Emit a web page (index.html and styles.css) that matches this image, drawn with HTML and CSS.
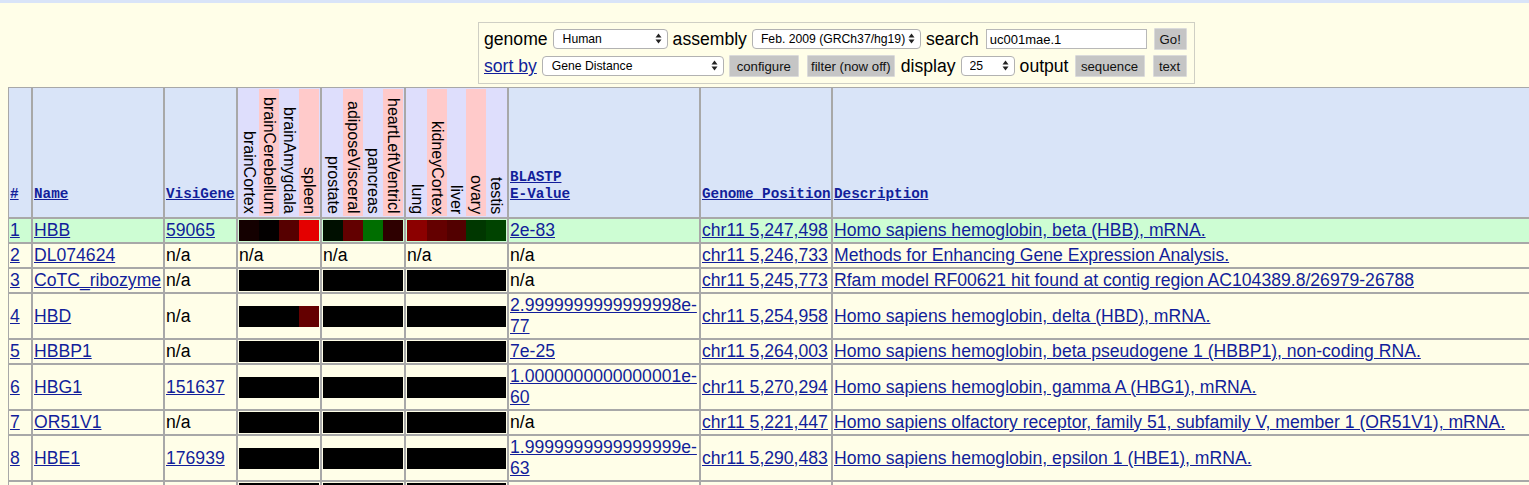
FILE: index.html
```html
<!DOCTYPE html>
<html lang="en">
<head>
<meta charset="utf-8">
<title>Gene Sorter</title>
<link rel="stylesheet" href="styles.css">
</head>
<body>
<div class="topbar"></div>
<main class="page">
  <form class="controls">
    <div class="ctl-row">
      <span class="lbl">genome</span>
      <span class="sel w-genome"><select><option>Human</option></select><svg class="arrows" viewBox="0 0 7 11" width="7" height="11"><path d="M0.5 4.5 L3.5 0.5 L6.5 4.5 Z M0.5 6.5 L3.5 10.5 L6.5 6.5 Z"/></svg></span>
      <span class="lbl">assembly</span>
      <span class="sel w-asm"><select><option>Feb. 2009 (GRCh37/hg19)</option></select><svg class="arrows" viewBox="0 0 7 11" width="7" height="11"><path d="M0.5 4.5 L3.5 0.5 L6.5 4.5 Z M0.5 6.5 L3.5 10.5 L6.5 6.5 Z"/></svg></span>
      <span class="lbl">search</span>
      <input class="search" type="text" value="uc001mae.1">
      <button type="button" class="btn w-go">Go!</button>
    </div>
    <div class="ctl-row">
      <a class="lbl link" href="#">sort by</a>
      <span class="sel w-sort"><select><option>Gene Distance</option></select><svg class="arrows" viewBox="0 0 7 11" width="7" height="11"><path d="M0.5 4.5 L3.5 0.5 L6.5 4.5 Z M0.5 6.5 L3.5 10.5 L6.5 6.5 Z"/></svg></span>
      <button type="button" class="btn w-conf">configure</button>
      <button type="button" class="btn w-filter">filter (now off)</button>
      <span class="lbl">display</span>
      <span class="sel w-disp"><select><option>25</option></select><svg class="arrows" viewBox="0 0 7 11" width="7" height="11"><path d="M0.5 4.5 L3.5 0.5 L6.5 4.5 Z M0.5 6.5 L3.5 10.5 L6.5 6.5 Z"/></svg></span>
      <span class="lbl">output</span>
      <button type="button" class="btn w-seq">sequence</button>
      <button type="button" class="btn w-text">text</button>
    </div>
  </form>

  <table class="sorter">
    <thead>
      <tr>
        <th class="c-num hd"><a href="#">#</a></th>
        <th class="c-name hd"><a href="#">Name</a></th>
        <th class="c-visi hd"><a href="#">VisiGene</a></th>
        <th class="c-g1 tis"><div class="labels"><span>brainCortex</span><span class="pk">brainCerebellum</span><span>brainAmygdala</span><span class="pk">spleen</span></div></th>
        <th class="c-g2 tis"><div class="labels"><span>prostate</span><span class="pk">adiposeVisceral</span><span>pancreas</span><span class="pk">heartLeftVentricl</span></div></th>
        <th class="c-g3 tis"><div class="labels"><span>lung</span><span class="pk">kidneyCortex</span><span>liver</span><span class="pk">ovary</span><span>testis</span></div></th>
        <th class="c-blast hd"><a href="#">BLASTP<br>E-Value</a></th>
        <th class="c-pos hd"><a href="#">Genome&nbsp;Position</a></th>
        <th class="c-desc hd"><a href="#">Description</a></th>
      </tr>
    </thead>
    <tbody>
      <tr class="hl">
        <td><a href="#">1</a></td>
        <td><a href="#">HBB</a></td>
        <td><a href="#">59065</a></td>
        <td><div class="heat"><span style="background:#140000"></span><span style="background:#030000"></span><span style="background:#560000"></span><span style="background:#e40000"></span></div></td>
        <td><div class="heat"><span style="background:#000f00"></span><span style="background:#620000"></span><span style="background:#006e00"></span><span style="background:#2e0000"></span></div></td>
        <td><div class="heat"><span style="background:#8c0000"></span><span style="background:#640000"></span><span style="background:#520000"></span><span style="background:#003700"></span><span style="background:#004300"></span></div></td>
        <td><a href="#">2e-83</a></td>
        <td><a href="#">chr11 5,247,498</a></td>
        <td><a href="#">Homo sapiens hemoglobin, beta (HBB), mRNA.</a></td>
      </tr>
      <tr>
        <td><a href="#">2</a></td>
        <td><a href="#">DL074624</a></td>
        <td>n/a</td>
        <td>n/a</td>
        <td>n/a</td>
        <td>n/a</td>
        <td>n/a</td>
        <td><a href="#">chr11 5,246,733</a></td>
        <td><a href="#">Methods for Enhancing Gene Expression Analysis.</a></td>
      </tr>
      <tr>
        <td><a href="#">3</a></td>
        <td><a href="#">CoTC_ribozyme</a></td>
        <td>n/a</td>
        <td><div class="heat"><span></span><span></span><span></span><span></span></div></td>
        <td><div class="heat"><span></span><span></span><span></span><span></span></div></td>
        <td><div class="heat"><span></span><span></span><span></span><span></span><span></span></div></td>
        <td>n/a</td>
        <td><a href="#">chr11 5,245,773</a></td>
        <td><a href="#">Rfam model RF00621 hit found at contig region AC104389.8/26979-26788</a></td>
      </tr>
      <tr>
        <td><a href="#">4</a></td>
        <td><a href="#">HBD</a></td>
        <td>n/a</td>
        <td><div class="heat"><span></span><span></span><span></span><span style="background:#640000"></span></div></td>
        <td><div class="heat"><span></span><span></span><span></span><span></span></div></td>
        <td><div class="heat"><span></span><span></span><span></span><span></span><span></span></div></td>
        <td><a href="#">2.9999999999999998e-<wbr>77</a></td>
        <td><a href="#">chr11 5,254,958</a></td>
        <td><a href="#">Homo sapiens hemoglobin, delta (HBD), mRNA.</a></td>
      </tr>
      <tr>
        <td><a href="#">5</a></td>
        <td><a href="#">HBBP1</a></td>
        <td>n/a</td>
        <td><div class="heat"><span></span><span></span><span></span><span></span></div></td>
        <td><div class="heat"><span></span><span></span><span></span><span></span></div></td>
        <td><div class="heat"><span></span><span></span><span></span><span></span><span></span></div></td>
        <td><a href="#">7e-25</a></td>
        <td><a href="#">chr11 5,264,003</a></td>
        <td><a href="#">Homo sapiens hemoglobin, beta pseudogene 1 (HBBP1), non-coding RNA.</a></td>
      </tr>
      <tr>
        <td><a href="#">6</a></td>
        <td><a href="#">HBG1</a></td>
        <td><a href="#">151637</a></td>
        <td><div class="heat"><span></span><span></span><span></span><span></span></div></td>
        <td><div class="heat"><span></span><span></span><span></span><span></span></div></td>
        <td><div class="heat"><span></span><span></span><span></span><span></span><span></span></div></td>
        <td><a href="#">1.0000000000000001e-<wbr>60</a></td>
        <td><a href="#">chr11 5,270,294</a></td>
        <td><a href="#">Homo sapiens hemoglobin, gamma A (HBG1), mRNA.</a></td>
      </tr>
      <tr>
        <td><a href="#">7</a></td>
        <td><a href="#">OR51V1</a></td>
        <td>n/a</td>
        <td><div class="heat"><span></span><span></span><span></span><span></span></div></td>
        <td><div class="heat"><span></span><span></span><span></span><span></span></div></td>
        <td><div class="heat"><span></span><span></span><span></span><span></span><span></span></div></td>
        <td>n/a</td>
        <td><a href="#">chr11 5,221,447</a></td>
        <td><a href="#">Homo sapiens olfactory receptor, family 51, subfamily V, member 1 (OR51V1), mRNA.</a></td>
      </tr>
      <tr>
        <td><a href="#">8</a></td>
        <td><a href="#">HBE1</a></td>
        <td><a href="#">176939</a></td>
        <td><div class="heat"><span></span><span></span><span></span><span></span></div></td>
        <td><div class="heat"><span></span><span></span><span></span><span></span></div></td>
        <td><div class="heat"><span></span><span></span><span></span><span></span><span></span></div></td>
        <td><a href="#">1.9999999999999999e-<wbr>63</a></td>
        <td><a href="#">chr11 5,290,483</a></td>
        <td><a href="#">Homo sapiens hemoglobin, epsilon 1 (HBE1), mRNA.</a></td>
      </tr>
      <tr class="partial">
        <td></td>
        <td></td>
        <td></td>
        <td><div class="heat"><span></span><span></span><span></span><span></span></div></td>
        <td><div class="heat"><span></span><span></span><span></span><span></span></div></td>
        <td><div class="heat"><span></span><span></span><span></span><span></span><span></span></div></td>
        <td></td>
        <td></td>
        <td></td>
      </tr>
    </tbody>
  </table>
</main>
</body>
</html>
```
FILE: styles.css
```css
html, body {
  margin: 0;
  padding: 0;
  overflow: hidden;
  background: #fffee8;
}

body {
  font-family: "Liberation Sans", Arial, sans-serif;
  font-size: 17.6px;
  color: #000;
}

a {
  color: #121e9a;
}

.topbar {
  height: 3px;
  background: #d9e4f8;
}

.page {
  padding: 0 8px;
}

/* ---------- controls box ---------- */
.controls {
  display: inline-flex;
  flex-direction: column;
  gap: 5px;
  margin: 19px 0 0 470px;
  padding: 5px 5px 6px 5px;
  border: 1px solid #cfcfc4;
}

.ctl-row {
  display: flex;
  align-items: center;
  gap: 4px;
  height: 22px;
}

.lbl {
  font-size: 17.6px;
  line-height: 22px;
  white-space: nowrap;
}

.link {
  color: #121e9a;
}

.sel {
  position: relative;
  display: inline-flex;
  margin: 0 1px;
}

.sel select {
  appearance: none;
  -webkit-appearance: none;
  height: 20px;
  margin: 0;
  padding: 0 0 0 9px;
  border: 1px solid #b2b2b2;
  border-radius: 4px;
  background: #fff;
  font-family: "Liberation Sans", Arial, sans-serif;
  font-size: 12.2px;
  color: #000;
}

.sel .arrows {
  position: absolute;
  right: 6px;
  top: 4px;
  fill: #222;
  pointer-events: none;
}

.w-genome select { width: 115px; }
.w-asm select { width: 169px; padding-left: 8px; }
.w-sort select { width: 182px; }
.w-disp select { width: 54px; padding-left: 8px; }

.search {
  width: 161px;
  height: 20px;
  box-sizing: border-box;
  margin: 0 1px 0 3px;
  padding: 0 3px;
  border: 1px solid #b8b8b8;
  background: #fff;
  font-family: "Liberation Sans", Arial, sans-serif;
  font-size: 13px;
  color: #000;
}

.btn {
  height: 22px;
  margin: 0 2px;
  padding: 0;
  border: 1px solid #dadada;
  border-radius: 1px;
  background: #c5c5c5;
  font-family: "Liberation Sans", Arial, sans-serif;
  font-size: 13.2px;
  color: #111;
  text-align: center;
}

.w-go { width: 33px; }
.w-conf { width: 70px; margin-left: 0; }
.w-filter { width: 88px; }
.w-seq { width: 70px; }
.w-text { width: 34px; }

/* ---------- table ---------- */
.sorter {
  margin-top: 3px;
  border-collapse: separate;
  border-spacing: 0;
  table-layout: fixed;
  width: 1552px;
}

.sorter th,
.sorter td {
  box-sizing: border-box;
  border: 1px solid #a8a8a8;
  padding: 1px;
  text-align: left;
}

.sorter th {
  background: #d9e4f8;
  vertical-align: bottom;
}

.sorter th.hd {
  padding-bottom: 14px;
  font-family: "Liberation Mono", "Courier New", monospace;
  font-weight: bold;
  font-size: 14.3px;
  line-height: 17px;
}

.c-num { width: 24px; }
.c-name { width: 132px; }
.c-visi { width: 73px; }
.c-g1 { width: 84px; }
.c-g2 { width: 84px; }
.c-g3 { width: 103px; }
.c-blast { width: 192px; }
.c-pos { width: 132px; }
.c-desc { width: 728px; }

.sorter th.tis {
  background: #dedefc;
}

.labels {
  display: flex;
  height: 127px;
}

.labels span {
  flex: 1 1 0;
  min-width: 0;
  writing-mode: vertical-rl;
  text-align: end;
  padding-bottom: 2px;
  font-family: "Liberation Sans", Arial, sans-serif;
  font-weight: normal;
  font-size: 16px;
  line-height: 19px;
  color: #000;
  white-space: nowrap;
}

.labels .pk {
  background: #ffcaca;
}

.sorter td {
  vertical-align: middle;
  line-height: 21px;
  white-space: normal;
}

.sorter tr.hl td {
  background: #cdfdd3;
}

.sorter tr.partial td {
  height: 25px;
}

.heat {
  display: flex;
  height: 21px;
}

.heat span {
  flex: 1 1 0;
  background: #000;
}
```
